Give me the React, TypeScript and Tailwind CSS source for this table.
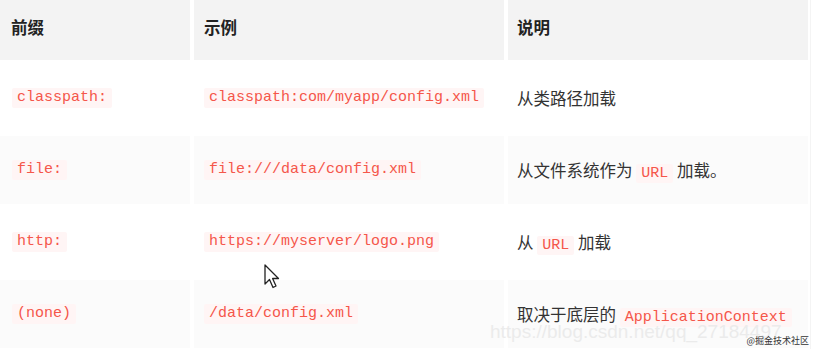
import React from "react";

const Code = ({ children }: { children: React.ReactNode }) => (
    <code className="bg-[#fff5f5] text-[#f5564a] px-[5px] py-[1px] rounded-[2px] text-[15px] leading-[18px] font-['Liberation_Mono',monospace]">
        {children}
    </code>
);

const rows = [
    { prefix: "classpath:", example: "classpath:com/myapp/config.xml", desc: <>从类路径加载</>, h: "h-[72px]", bg: "bg-white" },
    { prefix: "file:", example: "file:///data/config.xml", desc: <>从文件系统作为 <Code>URL</Code> 加载。</>, h: "h-[68px]", bg: "bg-[#fbfbfb]" },
    { prefix: "http:", example: "https://myserver/logo.png", desc: <>从 <Code>URL</Code> 加载</>, h: "h-[72px]", bg: "bg-white" },
    { prefix: "(none)", example: "/data/config.xml", desc: <>取决于底层的 <Code>ApplicationContext</Code></>, h: "h-[68px]", bg: "bg-[#fbfbfb]" },
];

const App = () => {
    return (
        <div className="relative w-[815px] h-[349px] overflow-hidden bg-white font-['Noto_Sans_CJK_SC','Noto_Sans',sans-serif] text-[#333]">
            <div className="grid grid-cols-[190px_310px_300px] gap-x-[4px] gap-y-[2px]">
                <div className="h-[60px] bg-[#f3f3f3] flex items-center pl-[11px] pb-[5px] font-bold text-[16.5px] text-[#222]">前缀</div>
                <div className="h-[60px] bg-[#f3f3f3] flex items-center pl-[10px] pb-[5px] font-bold text-[16.5px] text-[#222]">示例</div>
                <div className="h-[60px] bg-[#f3f3f3] flex items-center pl-[9px] pb-[5px] font-bold text-[16.5px] text-[#222]">说明</div>
                {rows.map((r) => (
                    <React.Fragment key={r.prefix}>
                        <div className={`${r.h} ${r.bg} flex items-center pl-[12px]`}>
                            <Code>{r.prefix}</Code>
                        </div>
                        <div className={`${r.h} ${r.bg} flex items-center pl-[10px]`}>
                            <Code>{r.example}</Code>
                        </div>
                        <div className={`${r.h} ${r.bg} flex items-center pl-[9px] text-[16.5px] whitespace-nowrap`}>
                            <span>{r.desc}</span>
                        </div>
                    </React.Fragment>
                ))}
            </div>
            <div className="absolute right-[4px] top-0 h-full w-px bg-[#f4f4f4]" />

            {/* mouse cursor */}
            <svg className="absolute left-[264px] top-[264px]" width="18" height="26" viewBox="0 0 18 26">
                <path d="M1 1 L1 20 L5.5 15.5 L9 23.5 L12 22 L8.6 14.5 L14.5 14.5 Z" fill="#fff" stroke="#222" strokeWidth="1.3" strokeLinejoin="round" />
            </svg>

            {/* watermarks */}
            <div className="absolute left-[490px] top-[320px] text-[19px] leading-[24px] text-[#ebebeb] font-['Liberation_Sans',sans-serif] whitespace-nowrap">
                https://blog.csdn.net/qq_27184497
            </div>
            <div className="absolute right-[6px] bottom-[3px] text-[9px] leading-[10px] text-[#333] whitespace-nowrap">
                @掘金技术社区
            </div>
        </div>
    );
};

export default App;
